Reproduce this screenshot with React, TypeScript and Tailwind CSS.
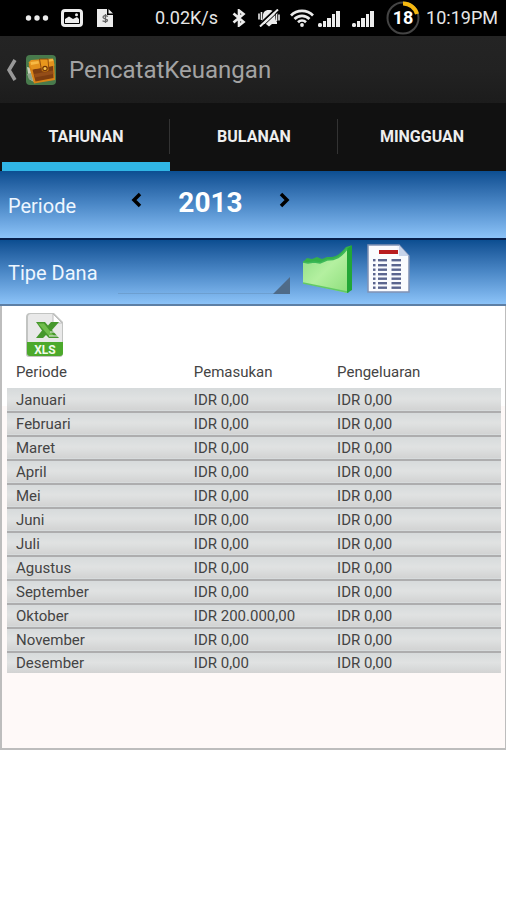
import { useState } from 'react';

const tabs = ['TAHUNAN', 'BULANAN', 'MINGGUAN'] as const;

const rows = [
  { period: 'Januari', income: 'IDR 0,00', expense: 'IDR 0,00' },
  { period: 'Februari', income: 'IDR 0,00', expense: 'IDR 0,00' },
  { period: 'Maret', income: 'IDR 0,00', expense: 'IDR 0,00' },
  { period: 'April', income: 'IDR 0,00', expense: 'IDR 0,00' },
  { period: 'Mei', income: 'IDR 0,00', expense: 'IDR 0,00' },
  { period: 'Juni', income: 'IDR 0,00', expense: 'IDR 0,00' },
  { period: 'Juli', income: 'IDR 0,00', expense: 'IDR 0,00' },
  { period: 'Agustus', income: 'IDR 0,00', expense: 'IDR 0,00' },
  { period: 'September', income: 'IDR 0,00', expense: 'IDR 0,00' },
  { period: 'Oktober', income: 'IDR 200.000,00', expense: 'IDR 0,00' },
  { period: 'November', income: 'IDR 0,00', expense: 'IDR 0,00' },
  { period: 'Desember', income: 'IDR 0,00', expense: 'IDR 0,00' },
];

function DotsIcon() {
  return (
    <svg viewBox="0 0 24 8" className="w-6 h-2" fill="#ececec" aria-hidden="true">
      <circle cx="3.5" cy="4" r="2.7" />
      <circle cx="12" cy="4" r="2.7" />
      <circle cx="20.5" cy="4" r="2.7" />
    </svg>
  );
}

function PictureIcon() {
  return (
    <svg viewBox="0 0 22 18" className="w-[22px] h-[18px]" aria-hidden="true">
      <rect x="1.5" y="1.5" width="19" height="15" rx="2.5" fill="#000" stroke="#ececec" strokeWidth="3" />
      <path d="M4 14v-4l4-2.500 4 2.500L16 8l2 2v4z" fill="#ececec" />
      <circle cx="15.5" cy="5.8" r="1.5" fill="#ececec" />
    </svg>
  );
}

function FileIcon() {
  return (
    <svg viewBox="0 0 16 18" className="w-4 h-[18px]" aria-hidden="true">
      <path d="M0 0h10v6h6v12H0z" fill="#ececec" />
      <path d="M11.5 0v4.5H16z" fill="#ececec" />
      <path d="M8.5 5v9M11 7.500c-2-1.500-5-1-5 .8 0 2 4.500 1 4.500 3 0 1.700-3 1.700-5 .5" fill="none" stroke="#666" strokeWidth="1.300" />
    </svg>
  );
}

function BluetoothIcon() {
  return (
    <svg viewBox="0 0 14 18" className="w-3.5 h-[18px]" fill="none" stroke="#ececec" strokeWidth="2.600" aria-hidden="true">
      <path d="M1.500 4.500l10 8.500L7 16.500v-15L11.500 5l-10 8.500" />
    </svg>
  );
}

function SilentIcon() {
  return (
    <svg viewBox="0 0 22 18" className="w-[22px] h-[18px]" aria-hidden="true">
      <path d="M11 1c4.500 0 6 2.500 6 5.500 0 3.500.5 5 2 6.500v2H3v-2c1.500-1.500 2-3 2-6.500C5 3.500 6.500 1 11 1z" fill="#ececec" />
      <path d="M8 15h6l-3 2.500z" fill="#ececec" />
      <path d="M3.500 3v8M1 4.500v6M18.500 4v8M21 5.500v6" stroke="#ececec" strokeWidth="1.600" />
      <path d="M1.500 15.500L18.500 -.5" stroke="#000" strokeWidth="2" />
      <path d="M2 17.500L20 .5" stroke="#ececec" strokeWidth="2" />
      <path d="M4 18L21.500 1.500" stroke="#000" strokeWidth="1" />
    </svg>
  );
}

function WifiIcon() {
  return (
    <svg viewBox="0 0 24 18" className="w-6 h-[18px]" fill="none" stroke="#ececec" strokeWidth="2.700" aria-hidden="true">
      <path d="M1 6.500a15.500 15.500 0 0 1 22 0M4.500 10a10.500 10.500 0 0 1 15 0M8 13.300a5.800 5.800 0 0 1 8 0" />
      <circle cx="12" cy="16" r="1.900" fill="#ececec" stroke="none" />
    </svg>
  );
}

function SignalIcon() {
  return (
    <svg viewBox="0 0 22 18" className="w-[22px] h-[18px]" fill="#ececec" aria-hidden="true">
      <rect x="0" y="14" width="4" height="4" rx="1.500" />
      <rect x="5" y="12" width="3" height="6" />
      <rect x="9" y="9" width="4" height="9" />
      <rect x="14" y="5" width="3" height="13" />
      <rect x="18" y="2" width="4" height="16" />
    </svg>
  );
}

function WalletIcon() {
  return (
    <svg viewBox="0 0 32 32" className="w-8 h-8" aria-hidden="true">
      <rect x="1" y="1" width="30" height="30" rx="4" fill="#487a4c" />
      <path d="M2 13l4 1 3 14-5-3z" fill="#c9cfba" />
      <path d="M2 20l4-1 2 8-4-2z" fill="#8fa58a" />
      <path d="M3.500 10.500L29 6.500l1 19.500-21 3.500z" fill="#d98316" />
      <path d="M7.500 15.500L28 12l.5 12-18 3.500z" fill="#7d3d10" />
      <path d="M9 20l19-3.500.3 3.500-18.500 3.500z" fill="#944d18" />
      <path d="M3.500 8.500L6 6l22-1.500 1.500 7L7 15.500z" fill="#e3921d" />
      <path d="M5.500 8l8-1 .5 2.500-8 1.500zM23.500 5.500l4.500-.5.500 2-5 .8z" fill="#f7b944" />
      <path d="M14.500 5h8.500l.8 10.500c-.5 3-6.500 3.500-7.300.5z" fill="#e8971c" stroke="#8b470b" strokeWidth="0.900" />
      <circle cx="20" cy="14.500" r="2.200" fill="#f7c34e" stroke="#703406" strokeWidth="1.200" />
    </svg>
  );
}

function AreaChartIcon() {
  return (
    <svg viewBox="0 0 52 50" className="w-[52px] h-[50px]" aria-hidden="true">
      <defs>
        <linearGradient id="area" x1="0" y1="0" x2="1" y2="1">
          <stop offset="0" stopColor="#8bdc83" />
          <stop offset="0.500" stopColor="#b4f0a0" />
          <stop offset="1" stopColor="#8fdf7d" />
        </linearGradient>
      </defs>
      <path d="M1 18l4-4 5 1 5-2 5 2 5-2h5c6-1 10-5 14-10l5-1.500v44L46 49l-3-1z" fill="#35b04a" />
      <path d="M45 5l5-4v45l-5 3z" fill="#22a637" />
      <path d="M1 18l5 1 6-1 6 1 7-3c9 0 14-3 20-11v44L1 39z" fill="url(#area)" />
      <path d="M1 18l5 1 6-1 6 1 7-3c9 0 14-3 20-11" fill="none" stroke="#3eb95a" strokeWidth="1.500" />
      <path d="M1 39l44 9" stroke="#62c966" strokeWidth="1.500" />
    </svg>
  );
}

function ReportIcon() {
  const lines = [15, 20, 24.5, 29, 33.5, 38, 42.5];
  return (
    <svg viewBox="0 0 46 50" className="w-[46px] h-[50px]" aria-hidden="true">
      <path d="M2 1h31l10 11v36H2z" fill="#f3f6fd" stroke="#8192b4" strokeWidth="1.500" />
      <path d="M3 2h28v10h11v35H3z" fill="#fff" opacity="0.600" />
      <path d="M33 1v11h10z" fill="#c8d4ea" />
      <rect x="13" y="6" width="19" height="4" fill="#b81c20" />
      {lines.map((y) => (
        <g key={y} fill="#5b658f">
          <rect x="7" y={y} width="2.500" height="2.400" />
          <rect x="12" y={y} width="9" height="2.400" />
          <rect x="25.500" y={y} width="9.500" height="2.400" />
        </g>
      ))}
    </svg>
  );
}

function XlsIcon() {
  return (
    <svg viewBox="0 0 40 46" className="w-10 h-[46px]" aria-hidden="true">
      <path d="M5 1h24l9 9v31c0 2-1 4-3 4H4c-2 0-3-1-3-3V5c0-2 1-4 4-4z" fill="#c2c4c2" />
      <path d="M6 2h22l9 9v19H3V5c0-2 1-3 3-3z" fill="#e9e9e9" />
      <path d="M28 2v9h9z" fill="#fff" stroke="#bdbdbd" strokeWidth="1" />
      <path d="M2 30h36v11c0 2-1 3-3 3H5c-2 0-3-1-3-3z" fill="#4ca92b" />
      <path d="M11 10h9l3 3.500L26 10h8l-7 8 7 8H24l-3-3-3 3h-7l6-7.500z" fill="#46972d" />
      <path d="M13 11.500h6l10 12.500h-5z" fill="#71bd4d" />
      <path d="M25 20h8M24 24h10" stroke="#e9e9e9" strokeWidth="1" />
      <text x="20" y="42" textAnchor="middle" fill="#f2fbe9" fontSize="12" fontWeight="700" fontFamily="Roboto, sans-serif">XLS</text>
    </svg>
  );
}

function StatusBar() {
  return (
    <div className="flex items-center h-9 pl-[25px] pr-2 bg-black text-[#e6e6e6] text-lg">
      <DotsIcon />
      <span className="ml-3"><PictureIcon /></span>
      <span className="ml-3.5"><FileIcon /></span>
      <span className="flex-1 pr-3.5 text-right whitespace-nowrap">0.02K/s</span>
      <BluetoothIcon />
      <span className="ml-3"><SilentIcon /></span>
      <span className="ml-2.5"><WifiIcon /></span>
      <span className="ml-1"><SignalIcon /></span>
      <span className="ml-3"><SignalIcon /></span>
      <span className="relative flex items-center justify-center w-[34px] h-[34px] ml-3 text-lg font-bold text-white">
        <svg viewBox="0 0 34 34" className="absolute inset-0" fill="none" aria-hidden="true">
          <circle cx="17" cy="17" r="15.500" stroke="#444" strokeWidth="2" />
          <path d="M17 2.500A14.500 14.500 0 0 1 31 13" stroke="#f5b810" strokeWidth="4" />
        </svg>
        18
      </span>
      <span className="ml-1.5">10:19PM</span>
    </div>
  );
}

export default function App() {
  const [activeTab, setActiveTab] = useState<string>('TAHUNAN');
  const [year, setYear] = useState(2013);

  return (
    <div className="min-h-screen bg-white font-[Roboto,sans-serif]">
      <StatusBar />

      <header className="flex items-center h-[67px] pl-1.5 bg-linear-to-b from-[#242424] via-[#222] to-[#1c1c1c]">
        <button aria-label="Kembali" className="flex items-center">
          <svg viewBox="0 0 12 22" className="w-3 h-[22px]" fill="none" stroke="#999" strokeWidth="3.500" aria-hidden="true">
            <path d="M9 1L3 11l6 10" />
          </svg>
          <span className="ml-[7px]"><WalletIcon /></span>
        </button>
        <h1 className="ml-3 text-2xl text-[#a3a3a3]">PencatatKeuangan</h1>
      </header>

      <nav className="grid grid-cols-3 h-[68px] pl-0.5 bg-[#111]">
        {tabs.map((tab, i) => (
          <button
            key={tab}
            onClick={() => setActiveTab(tab)}
            className={`relative flex items-center justify-center text-base font-bold text-[#eee] border-b-[9px] pt-2 ${
              activeTab === tab ? 'border-[#30b5e5]' : 'border-[#111]'
            }`}
          >
            {tab}
            {i < tabs.length - 1 && <span className="absolute right-0 top-4 w-px h-[35px] bg-[#333]" />}
          </button>
        ))}
      </nav>

      <section className="flex items-center h-[67px] px-2 bg-linear-to-b from-[#0b4e91] via-[#4b88c7] to-[#8cc3f8] text-[#eef6ff]">
        <span className="w-28 pt-0.5 text-xl">Periode</span>
        <button aria-label="Tahun sebelumnya" onClick={() => setYear(year - 1)} className="px-2.5 pb-2.5">
          <svg viewBox="0 0 12 16" className="w-3 h-4" fill="none" stroke="#000" strokeWidth="3.500" aria-hidden="true">
            <path d="M10 2L4 8l6 6" />
          </svg>
        </button>
        <span className="w-[117px] pb-1 text-center text-[28px] font-bold text-white">{year}</span>
        <button aria-label="Tahun berikutnya" onClick={() => setYear(year + 1)} className="px-2.5 pb-2.5">
          <svg viewBox="0 0 12 16" className="w-3 h-4" fill="none" stroke="#000" strokeWidth="3.500" aria-hidden="true">
            <path d="M2 2l6 6-6 6" />
          </svg>
        </button>
      </section>

      <section className="flex items-center h-[68px] px-2 border-t-2 border-b-2 border-t-[#071f4b] border-b-[#5d7fa5] bg-linear-to-b from-[#0b4e91] via-[#4b88c7] to-[#8cc3f8] text-[#eef6ff]">
        <label htmlFor="fund" className="w-[110px] pt-0.5 text-xl">Tipe Dana</label>
        <div className="relative w-[172px]">
          <select id="fund" className="block w-full h-11 appearance-none bg-transparent border-b border-[#6d9fd0] outline-none">
            <option value=""></option>
          </select>
          <svg viewBox="0 0 18 18" className="absolute right-0 bottom-0 w-[18px] h-[18px] pointer-events-none" aria-hidden="true">
            <path d="M18 1v17H1z" fill="#4f6b88" />
          </svg>
        </div>
        <button aria-label="Grafik" className="ml-3 pb-1.5"><AreaChartIcon /></button>
        <button aria-label="Laporan" className="ml-3 pb-1.5"><ReportIcon /></button>
      </section>

      <main className="pt-1.5 pl-[5px] pr-1 pb-[75px] border-l-2 border-r border-b-2 border-[#bdbdbd] bg-[linear-gradient(#fff_100px,#fef9f8_100px)]">
        <button aria-label="Ekspor XLS" className="block ml-[18px]"><XlsIcon /></button>
        <table className="w-full table-fixed text-left text-[15px] leading-5 text-[#444]">
          <thead>
            <tr className="h-[30px] align-top">
              <th className="w-[36%] px-[9px] py-1 font-normal">Periode</th>
              <th className="w-[29%] px-[9px] py-1 font-normal">Pemasukan</th>
              <th className="px-[9px] py-1 font-normal">Pengeluaran</th>
            </tr>
          </thead>
          <tbody>
            {rows.map((row) => (
              <tr
                key={row.period}
                className="h-6 border-b-2 border-[#adadae] bg-linear-to-b from-[#d6dadb] via-[#e0e2e2] to-[#d2d3d3] last:h-5 last:border-b-0"
              >
                <td className="px-[9px]">{row.period}</td>
                <td className="px-[9px]">{row.income}</td>
                <td className="px-[9px]">{row.expense}</td>
              </tr>
            ))}
          </tbody>
        </table>
      </main>
    </div>
  );
}
